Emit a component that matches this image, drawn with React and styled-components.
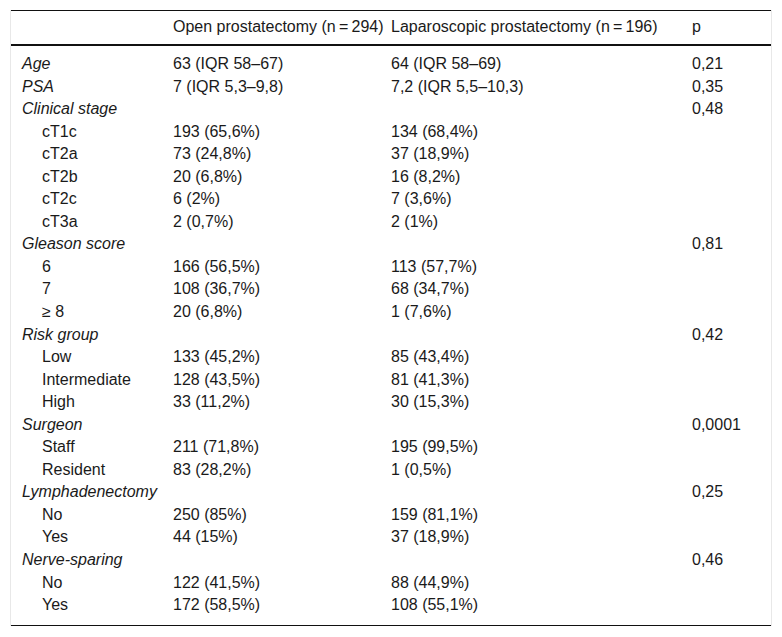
import React from "react";
import styled, { createGlobalStyle } from "styled-components";

const GlobalStyle = createGlobalStyle`
    body {
        margin: 0;
        background: #fff;
        font-family: "Liberation Sans", Arial, sans-serif;
        color: #1a1a1a;
    }
`;

const Wrapper = styled.div`
    margin: 10px 0 0 10px;
    width: 760px;
    border-left: 1px solid #e8e8e8;
    border-right: 1px solid #e8e8e8;
`;

const Table = styled.table`
    width: 760px;
    table-layout: fixed;
    border-collapse: collapse;
    border-top: 1px solid #111;
    border-bottom: 1px solid #111;
    font-size: 16px;
    line-height: 16.5px;
`;

const HeadCell = styled.th`
    text-align: left;
    font-weight: normal;
    padding: 8px 0 8px 11px;
    height: 32px;
    box-sizing: border-box;
    border-bottom: 2px solid #111;
    white-space: nowrap;
`;

const Row = styled.tr`
    &:first-child td {
        padding-top: 10.5px;
    }
    &:last-child td {
        padding-bottom: 11.5px;
    }
`;

const Cell = styled.td`
    padding: 3px 0 3.05px ${(p) => (p.$indent ? "31px" : "11px")};
    font-style: ${(p) => (p.$italic ? "italic" : "normal")};
    white-space: nowrap;
    vertical-align: middle;
`;

const T = "\u2009";

const rows = [
    { label: "Age", group: true, a: "63 (IQR 58–67)", b: "64 (IQR 58–69)", p: "0,21" },
    { label: "PSA", group: true, a: "7 (IQR 5,3–9,8)", b: "7,2 (IQR 5,5–10,3)", p: "0,35" },
    { label: "Clinical stage", group: true, a: "", b: "", p: "0,48" },
    { label: "cT1c", a: "193 (65,6%)", b: "134 (68,4%)" },
    { label: "cT2a", a: "73 (24,8%)", b: "37 (18,9%)" },
    { label: "cT2b", a: "20 (6,8%)", b: "16 (8,2%)" },
    { label: "cT2c", a: "6 (2%)", b: "7 (3,6%)" },
    { label: "cT3a", a: "2 (0,7%)", b: "2 (1%)" },
    { label: "Gleason score", group: true, a: "", b: "", p: "0,81" },
    { label: "6", a: "166 (56,5%)", b: "113 (57,7%)" },
    { label: "7", a: "108 (36,7%)", b: "68 (34,7%)" },
    { label: "≥ 8", a: "20 (6,8%)", b: "1 (7,6%)" },
    { label: "Risk group", group: true, a: "", b: "", p: "0,42" },
    { label: "Low", a: "133 (45,2%)", b: "85 (43,4%)" },
    { label: "Intermediate", a: "128 (43,5%)", b: "81 (41,3%)" },
    { label: "High", a: "33 (11,2%)", b: "30 (15,3%)" },
    { label: "Surgeon", group: true, a: "", b: "", p: "0,0001" },
    { label: "Staff", a: "211 (71,8%)", b: "195 (99,5%)" },
    { label: "Resident", a: "83 (28,2%)", b: "1 (0,5%)" },
    { label: "Lymphadenectomy", group: true, a: "", b: "", p: "0,25" },
    { label: "No", a: "250 (85%)", b: "159 (81,1%)" },
    { label: "Yes", a: "44 (15%)", b: "37 (18,9%)" },
    { label: "Nerve-sparing", group: true, a: "", b: "", p: "0,46" },
    { label: "No", a: "122 (41,5%)", b: "88 (44,9%)" },
    { label: "Yes", a: "172 (58,5%)", b: "108 (55,1%)" },
];

const App = () => {
    return (
        <>
            <GlobalStyle />
            <Wrapper>
                <Table>
                    <colgroup>
                        <col style={{ width: 151 }} />
                        <col style={{ width: 218 }} />
                        <col style={{ width: 301 }} />
                        <col style={{ width: 90 }} />
                    </colgroup>
                    <thead>
                        <tr>
                            <HeadCell />
                            <HeadCell>Open prostatectomy (n{T}={T}294)</HeadCell>
                            <HeadCell>Laparoscopic prostatectomy (n{T}={T}196)</HeadCell>
                            <HeadCell>p</HeadCell>
                        </tr>
                    </thead>
                    <tbody>
                        {rows.map((r, i) => (
                            <Row key={i}>
                                <Cell $italic={r.group} $indent={!r.group}>
                                    {r.label}
                                </Cell>
                                <Cell>{r.a}</Cell>
                                <Cell>{r.b}</Cell>
                                <Cell>{r.p || ""}</Cell>
                            </Row>
                        ))}
                    </tbody>
                </Table>
            </Wrapper>
        </>
    );
};

export default App;
